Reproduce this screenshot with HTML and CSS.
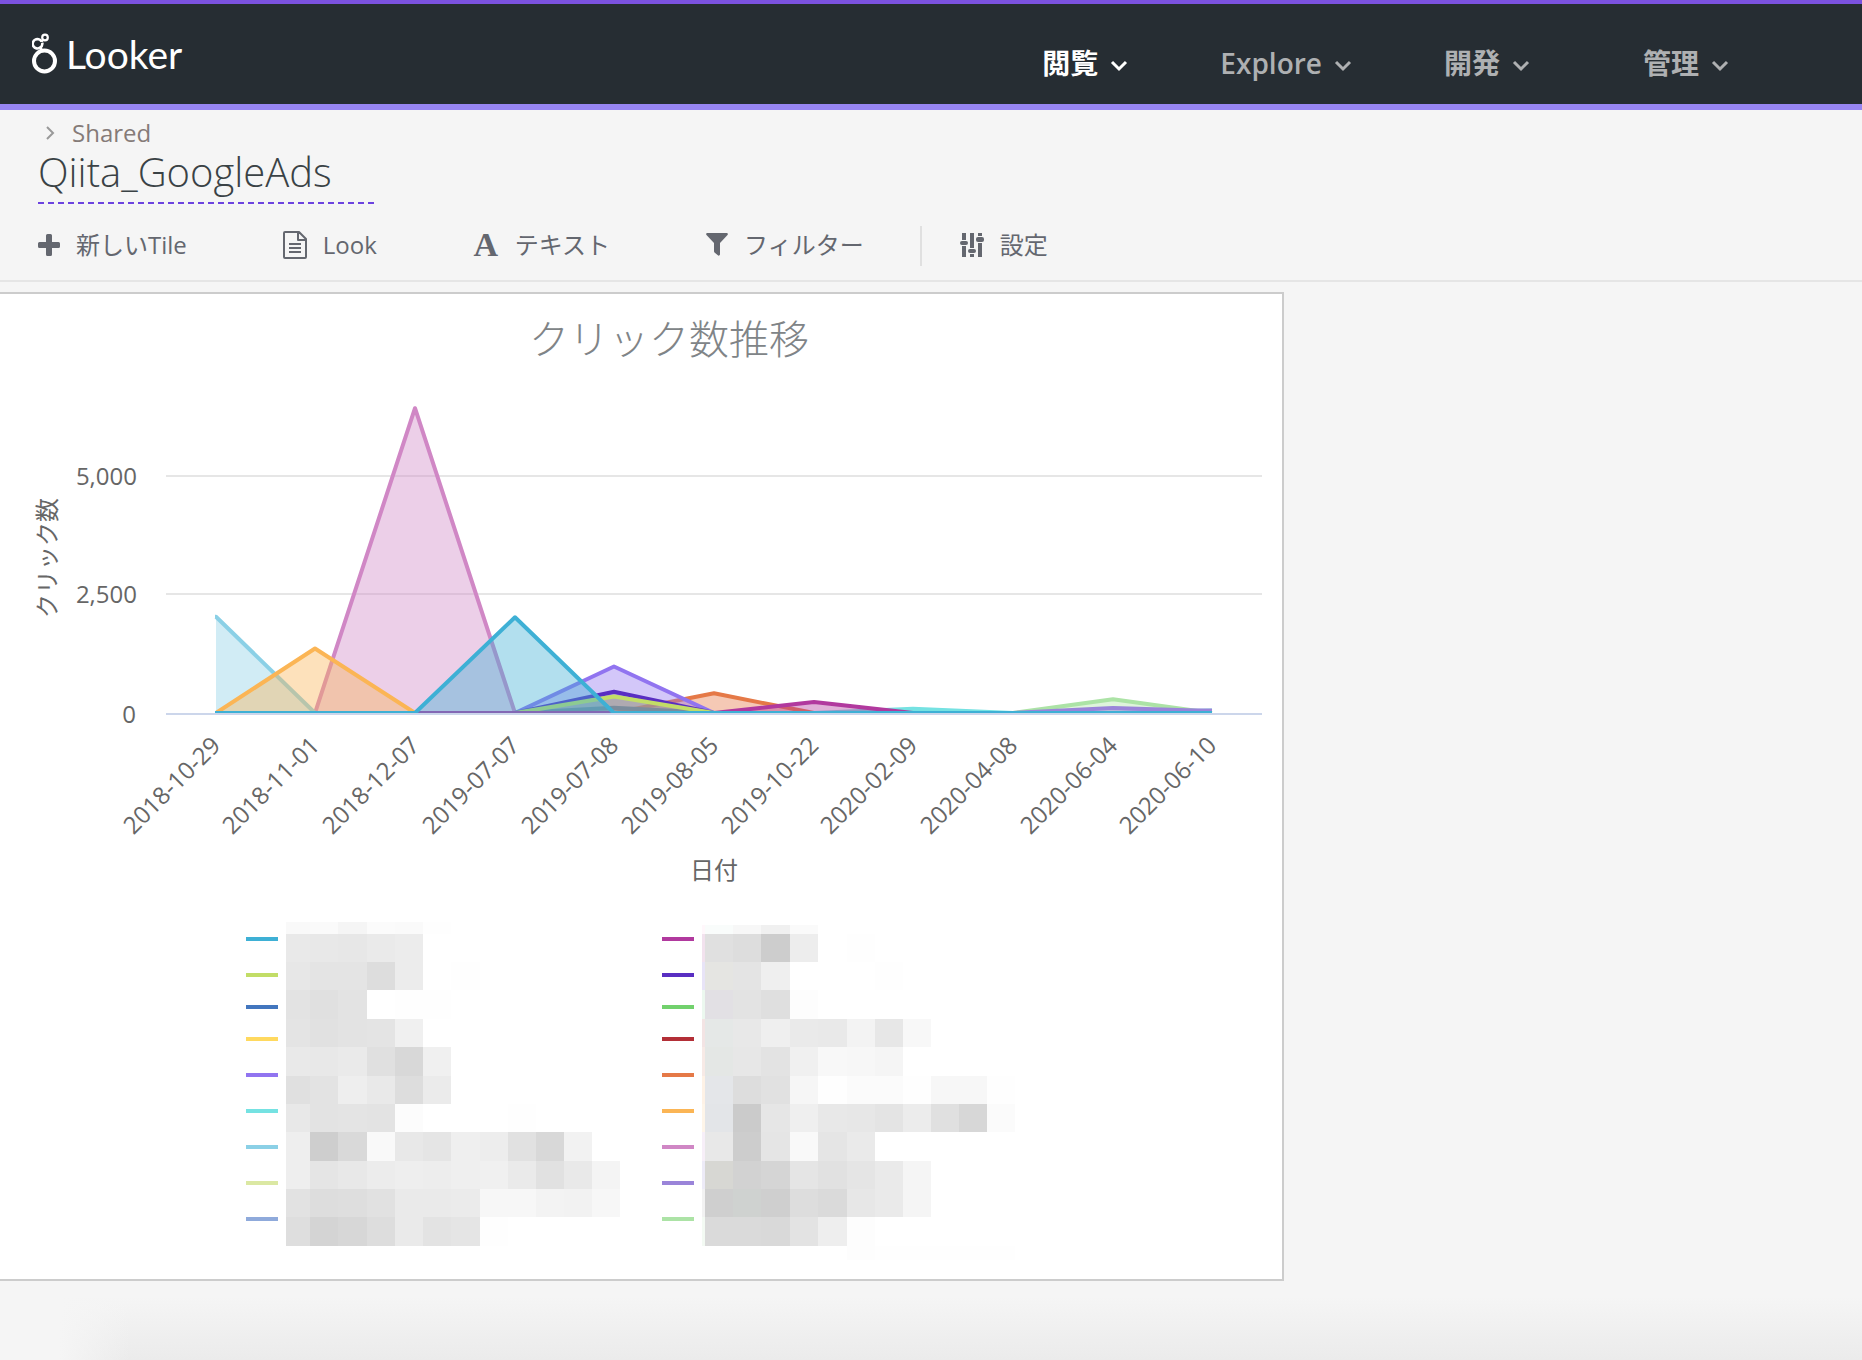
FILE: index.html
```html
<!DOCTYPE html>
<html lang="ja">
<head>
<meta charset="utf-8">
<meta name="viewport" content="width=device-width, initial-scale=1">
<title>Qiita_GoogleAds - Looker</title>
<link rel="stylesheet" href="styles.css">
</head>
<body>
<header class="topbar">
  <a class="brand" href="#">
    <svg class="brand-mark" width="26" height="42" viewBox="0 0 26 42" fill="none" stroke="#fff" aria-hidden="true">
      <circle cx="12.500" cy="28" r="10.500" stroke-width="4"/>
      <path d="M9.500 17.500 8.700 14.500M9.500 8.500A4.700 4.700 0 1 0 8 14.700Q10.800 13 10.300 9.800" stroke-width="2.600"/>
      <circle cx="13" cy="4.500" r="2.800" stroke-width="2.200"/>
      <path d="M9.500 9 11 7" stroke-width="2"/>
    </svg>
    <span class="brand-name">Looker</span>
  </a>
  <nav class="mainnav">
    <button class="nav-item is-active" type="button">閲覧<svg class="caret" viewBox="0 0 18 12"><path d="M2 2l7 7 7-7"/></svg></button>
    <button class="nav-item nav-latin" type="button">Explore<svg class="caret" viewBox="0 0 18 12"><path d="M2 2l7 7 7-7"/></svg></button>
    <button class="nav-item" type="button">開発<svg class="caret" viewBox="0 0 18 12"><path d="M2 2l7 7 7-7"/></svg></button>
    <button class="nav-item nav-admin" type="button">管理<svg class="caret" viewBox="0 0 18 12"><path d="M2 2l7 7 7-7"/></svg></button>
  </nav>
</header>

<section class="dash-head">
  <div class="crumbs">
    <svg width="10" height="14" viewBox="0 0 10 14" fill="none" stroke="#999" stroke-width="2" aria-hidden="true"><path d="M2 1l6 6-6 6"/></svg>
    <a href="#">Shared</a>
  </div>
  <h1 class="dash-title">Qiita_GoogleAds</h1>
  <div class="tools">
    <button class="tool" type="button">
      <svg width="22" height="22" viewBox="0 0 22 22" fill="currentColor" aria-hidden="true"><path d="M9.500 0h3a1.500 1.500 0 0 1 1.500 1.500V8h6.500A1.500 1.500 0 0 1 22 9.500v3a1.500 1.500 0 0 1-1.500 1.500H14v6.500a1.500 1.500 0 0 1-1.500 1.500h-3A1.500 1.500 0 0 1 8 20.500V14H1.500A1.500 1.500 0 0 1 0 12.500v-3A1.500 1.500 0 0 1 1.500 8H8V1.500A1.500 1.500 0 0 1 9.500 0z"/></svg>
      新しいTile
    </button>
    <button class="tool" type="button">
      <svg width="24" height="28" viewBox="0 0 24 28" fill="none" stroke="currentColor" stroke-width="2" aria-hidden="true"><path d="M2 1h14l7 7v18a1 1 0 0 1-1 1H2a1 1 0 0 1-1-1V2a1 1 0 0 1 1-1zM15 1v8h8M6 13h12M6 17h12M6 21h12" stroke-linejoin="round"/></svg>
      Look
    </button>
    <button class="tool" type="button">
      <span class="letter-icon" aria-hidden="true">A</span>
      テキスト
    </button>
    <button class="tool" type="button">
      <svg width="22" height="23" viewBox="0 0 22 23" fill="currentColor" aria-hidden="true"><path d="M1 0h20q1.500.500.500 2L14 10v11.500q-.500 1.500-1.800 1L8.500 19.500 8 18.500V10L.500 2Q-.500.500 1 0z"/></svg>
      フィルター
    </button>
    <button class="tool tool-settings" type="button">
      <svg width="24" height="24" viewBox="0 0 24 24" fill="currentColor" aria-hidden="true"><path d="M2 0h4v7H2zM2 13h4v11H2zM10 0h4v15H10zM10 21h4v3H10zM18 0h4v3H18zM18 10h4v14H18z"/><rect y="8" width="8" height="4" rx="2"/><rect x="8" y="16" width="8" height="4" rx="2"/><rect x="16" y="4" width="8" height="5" rx="2"/></svg>
      設定
    </button>
  </div>
</section>

<main class="board">
  <article class="tile">
    <h2 class="tile-title">クリック数推移</h2>
    <svg class="chart" viewBox="0 368 1282 912" role="img" aria-label="クリック数推移">
      <defs><clipPath id="plot"><rect x="166" y="380" width="1096" height="334"/></clipPath></defs>
      <g class="grid">
        <path d="M166 477H1262M166 595H1262"/>
        <path class="baseline" d="M166 715H1262"/>
      </g>
      <g id="series" clip-path="url(#plot)"></g>
      <g class="axis y-axis">
        <text x="137" y="486">5,000</text>
        <text x="137" y="604">2,500</text>
        <text x="136" y="724">0</text>
      </g>
      <g class="axis x-axis" id="dates"></g>
      <text class="axis-name" transform="translate(56 559) rotate(-90)">クリック数</text>
      <text class="axis-name" x="714" y="880">日付</text>
      <g id="redacted"></g>
      <g id="legend"></g>
    </svg>
  </article>
</main>
<div class="page-end"></div>
<script src="chart.js"></script>
</body>
</html>
```
FILE: styles.css
```css
* { box-sizing: border-box; }

body {
  margin: 0;
  min-height: 100vh;
  display: flex;
  flex-direction: column;
  background: #f5f5f5;
  font-family: "Open Sans", "Noto Sans CJK JP", sans-serif;
  font-size: 24px;
  color: #666;
}

a { color: inherit; text-decoration: none; }

button {
  border: 0;
  padding: 0;
  background: none;
  font: inherit;
  color: inherit;
  cursor: pointer;
}

.topbar {
  display: flex;
  justify-content: space-between;
  height: 110px;
  padding: 0 133px 0 32px;
  background: #262d33;
  border-top: 4px solid #7b52e0;
  border-bottom: 6px solid #9785f2;
}

.brand {
  display: flex;
  align-items: center;
  gap: 8px;
  color: #fff;
}

.brand-name {
  font: 39px/48px Lato, sans-serif;
}

.mainnav {
  display: flex;
  align-items: center;
  gap: 92px;
  padding-top: 18px;
}

.nav-item {
  display: flex;
  align-items: center;
  gap: 12px;
  font-size: 28px;
  line-height: 40px;
  font-weight: 700;
  color: #aeb0b2;
}

.nav-item.is-active { color: #fff; }
.nav-latin { font-weight: 600; }
.nav-admin { margin-left: 21px; }

.caret {
  width: 18px;
  height: 12px;
  margin-top: 6px;
  fill: none;
  stroke: currentColor;
  stroke-width: 3;
}

.dash-head {
  padding: 7px 38px 14px;
  border-bottom: 2px solid #e5e5e5;
}

.crumbs {
  display: flex;
  align-items: center;
  gap: 17px;
  padding-left: 7px;
  line-height: 32px;
  color: #857b78;
}

.dash-title {
  width: max-content;
  min-width: 336px;
  margin: 0;
  padding-bottom: 8px;
  font-size: 40px;
  line-height: 45px;
  font-weight: 300;
  color: #3a4245;
  border-bottom: 2px dashed #6c43e0;
}

.tools {
  display: flex;
  align-items: center;
  gap: 96px;
  height: 40px;
  margin-top: 22px;
  color: #64676f;
}

.tool {
  display: flex;
  align-items: center;
  gap: 16px;
  height: 40px;
  padding-bottom: 3px;
  line-height: 36px;
  white-space: nowrap;
}

.letter-icon {
  width: 26px;
  font: bold 34px/36px "Liberation Serif", serif;
}

.tool-settings {
  margin-left: -40px;
  padding-left: 38px;
  border-left: 2px solid #e0e0e0;
}

.board {
  display: grid;
  grid-template-columns: 642fr 289fr;
  padding-top: 10px;
}

.tile {
  background: #fff;
  border: 2px solid #ccc;
  border-left: 0;
}

.tile-title {
  margin: 0;
  padding: 17px 0 0 56px;
  font-size: 40px;
  line-height: 56px;
  font-weight: 300;
  text-align: center;
  color: #808487;
}

.chart { display: block; width: 100%; }

.grid path { stroke: #e6e6e6; stroke-width: 2; }
.grid .baseline { stroke: #ccd6eb; }

.axis, .axis-name { font-size: 24px; fill: #666; }
.axis { text-anchor: end; }
.axis-name { text-anchor: middle; }

.area { fill-opacity: 0.4; }
.line { fill: none; stroke-width: 4; stroke-linejoin: round; }

.page-end {
  flex: 1;
  background:
    linear-gradient(to right, #f5f5f5 60px, rgba(245, 245, 245, 0) 130px),
    linear-gradient(to bottom, #f5f5f5 20%, #ebebeb);
}
```
FILE: chart.js
```javascript
const NS = 'http://www.w3.org/2000/svg';
function add(parentId, tag, attrs, text) {
  const el = document.createElementNS(NS, tag);
  for (const k in attrs) el.setAttribute(k, attrs[k]);
  if (text) el.textContent = text;
  document.getElementById(parentId).appendChild(el);
}

const dates = ['2018-10-29', '2018-11-01', '2018-12-07', '2019-07-07', '2019-07-08', '2019-08-05',
  '2019-10-22', '2020-02-09', '2020-04-08', '2020-06-04', '2020-06-10'];
const step = 1096 / dates.length;
const xAt = i => Math.round(166 + step * (i + 0.5));
const yAt = v => 714 - v * 237 / 5000;

// Each series lists only its non-zero days: { date index: clicks }
const series = [
  ['#3eb0d5', { 3: 2020 }], ['#b1399e', { 6: 230 }],
  ['#c2dd67', { 4: 350 }], ['#592ec2', { 4: 450 }],
  ['#4276be', { 4: 110 }], ['#72d16d', {}],
  ['#ffd95f', {}], ['#b32f37', {}],
  ['#9174f0', { 4: 980 }], ['#e57947', { 5: 415 }],
  ['#75e2e2', { 7: 90 }], ['#fbb555', { 1: 1360 }],
  ['#8bd0e6', { 0: 2030 }], ['#d087c5', { 2: 6430 }],
  ['#dbe8a3', {}], ['#9a84d9', { 9: 105, 10: 40 }],
  ['#8faadb', { 10: 60 }], ['#ace3a6', { 9: 290 }]
];

[...series].reverse().forEach(([color, data]) => {
  const pts = dates.map((d, i) => xAt(i) + ' ' + yAt(data[i] || 0)).join('L');
  add('series', 'path', { class: 'area', fill: color, d: 'M' + xAt(0) + ' 714L' + pts + 'L' + xAt(10) + ' 714Z' });
  add('series', 'path', { class: 'line', stroke: color, d: 'M' + (xAt(0) - 1) + ' ' + yAt(data[0] || 0) + 'L' + pts });
});

dates.forEach((d, i) => add('dates', 'text', { transform: `translate(${xAt(i) + 6} 748) rotate(-45)` }, d));

const legendRows = [938, 974, 1006, 1038, 1074, 1110, 1146, 1182, 1218];
series.forEach(([color], i) => add('legend', 'rect',
  { x: i % 2 ? 662 : 246, y: legendRows[i >> 1], width: 32, height: 4, fill: color }));

// Masked labels: one hex colour per cell, row by row
function mosaic(xs, ys, rows) {
  rows.forEach((row, r) => row.split(' ').forEach((c, i) => {
    if (c !== '-') add('redacted', 'rect', {
      x: xs[i], y: ys[r], width: xs[i + 1] - xs[i], height: ys[r + 1] - ys[r],
      fill: '#' + (c.length === 2 ? c + c + c : c), 'shape-rendering': 'crispEdges'
    });
  }));
}

mosaic([286, 310, 338, 367, 395, 423, 451, 480, 508, 536, 564, 592, 620],
  [923, 935, 963, 991, 1020, 1048, 1077, 1105, 1133, 1162, 1190, 1218, 1247], [
  'f9 fa f5 fb fa fe',
  'e9 e8 e7 ea ec',
  'e7 e4 e4 dd ec - fe',
  'e3 e0 e3 - fe fe',
  'e4 e1 e3 e4 f0',
  'e9 e8 ea e0 d8 f0',
  'e0 e3 ee e9 dd eb',
  'e8 e3 e4 e3 fc - - - fe',
  'ee ce d9 f9 e8 e5 ef ed e1 d8 f2',
  'ee e5 e8 ec ee ed ef f0 ea e1 e9 f4',
  'e2 dd de e1 ea ea eb f7 f7 f3 f2 f7',
  'de d4 d7 dd ea e3 e5 fe'
]);

mosaic([702, 705, 733, 761, 790, 818, 847, 875, 903, 931, 959, 987, 1015],
  [926, 935, 963, 991, 1020, 1048, 1077, 1105, 1133, 1162, 1190, 1218, 1247, 1261], [
  'fff7fb f9fcfb f7 f0 fa',
  'f2e2ee e0 dd cd ed - fe',
  'e8e4f7 e5e5e2 e4 ef - - - fe',
  'ecf8ef e2e0e4 e3 df fd',
  'f3e4e4 e5e8e7 e8 ef ea e9 f3 e7 f8',
  'f7eae6 e4e7e5 e7 e3 f0 f8 f7 f5',
  'fef2e6 e4e6e9 dd e1 f6 fe fb fb fe f7 f7 fe',
  'fef5e9 e3e5e8 cb e6 ef e8 e7 e4 ec e0 d7 fb',
  'f7eff8 e8 cd e5 f9 e5 ea',
  'edebf7 d7d7d3 d2 d5 e5 e1 e5 ea f5',
  'f2 cf cfd2d0 cf dd da e7 ea f5',
  'f3faf3 da da d9 e3 ee fd',
  '- - - - - - fd fe fe fe fe fe'
]);
```
